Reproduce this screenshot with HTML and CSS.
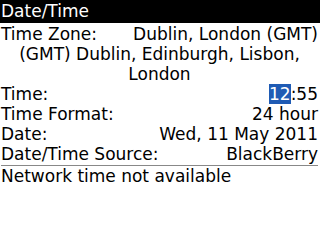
FILE: index.html
```html
<!DOCTYPE html>
<html>
<head>
<meta charset="utf-8">
<link rel="stylesheet" href="styles.css">
</head>
<body>
<div class="screen">
  <div class="title">Date/Time</div>
  <div class="content">
    <div class="row"><span class="label">Time Zone:</span><span class="value">Dublin, London (GMT)</span></div>
    <div class="zone">(GMT) Dublin, Edinburgh, Lisbon, London</div>
    <div class="row"><span class="label">Time:</span><span class="value"><span class="sel">12</span>:55</span></div>
    <div class="row"><span class="label">Time Format:</span><span class="value">24 hour</span></div>
    <div class="row"><span class="label">Date:</span><span class="value">Wed, 11 May 2011</span></div>
    <div class="row"><span class="label">Date/Time Source:</span><span class="value">BlackBerry</span></div>
    <div class="status">Network time not available</div>
  </div>
</div>
</body>
</html>
```
FILE: styles.css
```css
html, body {
  margin: 0;
  padding: 0;
  background: #fff;
}
.screen {
  width: 320px;
  height: 240px;
  overflow: hidden;
  font-family: "DejaVu Sans", sans-serif;
  font-size: 17px;
  color: #000;
}
.title {
  background: #000;
  color: #fff;
  height: 23px;
  line-height: 22px;
  padding-left: 1px;
}
.content {
  padding: 1px 2px 0 1px;
}
.row {
  display: flex;
  justify-content: space-between;
  line-height: 20px;
  height: 20px;
}
.zone {
  text-align: center;
  line-height: 20px;
  padding: 0 8px;
}
.sel {
  background: #1f5bb4;
  color: #fff;
}
.status {
  border-top: 1px solid #888;
  margin-top: 1px;
  line-height: 20px;
}
```
